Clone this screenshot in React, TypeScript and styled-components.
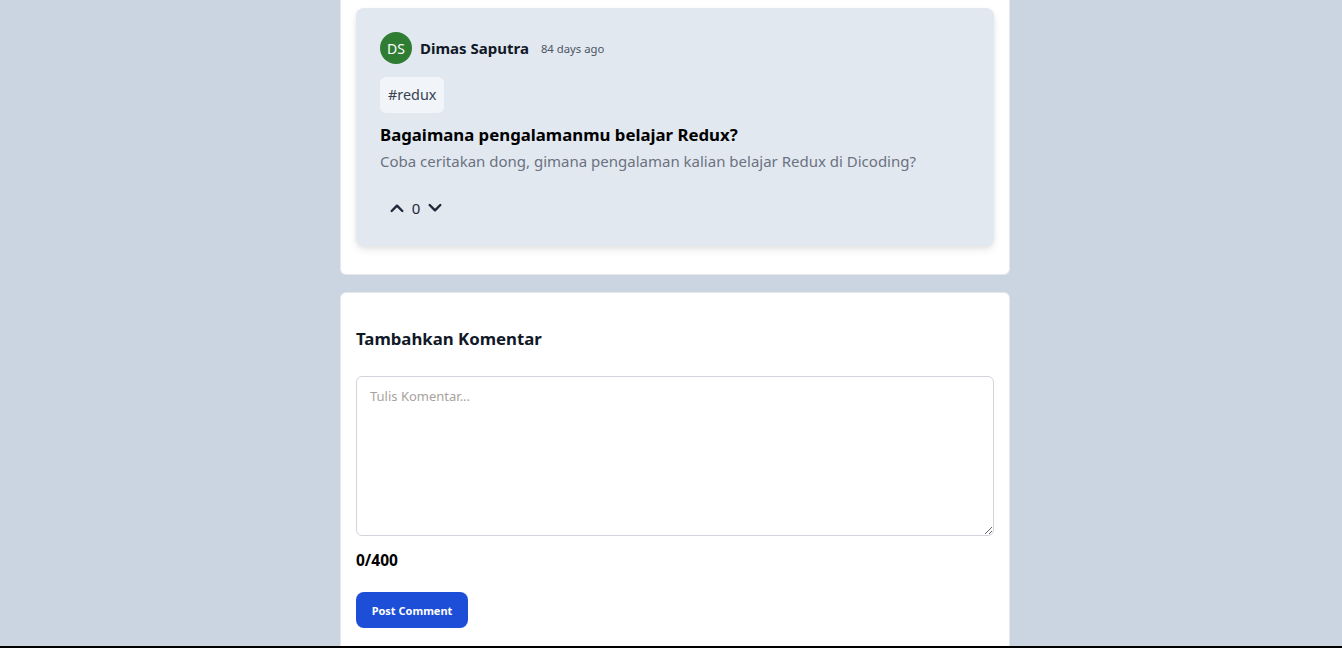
import React from "react";
import styled, { createGlobalStyle } from "styled-components";

const Global = createGlobalStyle`
  html, body { margin: 0; padding: 0; background: #cbd5e1; }
  body { font-family: "Noto Sans", "Open Sans", sans-serif; height: 648px; overflow: hidden; }
  * { box-sizing: border-box; }
`;

const Page = styled.div`
  display: flex;
  flex-direction: column;
  align-items: center;
  gap: 17px;
  padding-left: 8px;
  height: 646px;
  overflow: hidden;
`;

const Panel = styled.section<{ $top?: boolean }>`
  width: 670px;
  background: #ffffff;
  border: 1px solid #e5e7eb;
  border-radius: ${(p) => (p.$top ? "0 0 6px 6px" : "6px 6px 0 0")};
  border-top: ${(p) => (p.$top ? "none" : "1px solid #e5e7eb")};
  padding: ${(p) => (p.$top ? "8px 15px 28px" : "26px 15px 40px")};
  flex-shrink: 0;
`;

const Card = styled.article`
  background: #e2e8f0;
  border-radius: 8px;
  box-shadow: 0 4px 8px rgba(0, 0, 0, 0.08), 0 2px 4px rgba(0, 0, 0, 0.05);
  padding: 24px 24px 28px;
  display: flex;
  flex-direction: column;
`;

const Header = styled.div`
  display: flex;
  align-items: center;
`;

const Avatar = styled.div`
  width: 32px;
  height: 32px;
  border-radius: 50%;
  background: #2e7d32;
  color: #fff;
  font-size: 14px;
  display: flex;
  align-items: center;
  justify-content: center;
  margin-right: 8px;
`;

const Name = styled.span`
  font-weight: 700;
  font-size: 15px;
  color: #111827;
  margin-right: 12px;
`;

const Time = styled.span`
  font-size: 11.3px;
  color: #4b5563;
`;

const Tag = styled.span`
  align-self: flex-start;
  margin-top: 13px;
  background: #f1f5f9;
  border-radius: 6px;
  padding: 0 8px;
  height: 36px;
  line-height: 36px;
  font-size: 14.4px;
  color: #374151;
`;

const Title = styled.h2`
  margin: 10px 0 0;
  font-size: 16.8px;
  line-height: 24px;
  font-weight: 700;
  color: #000;
`;

const Body = styled.p`
  margin: 2px 0 0;
  font-size: 15px;
  line-height: 24px;
  color: #6b7280;
`;

const Votes = styled.div`
  display: flex;
  align-items: center;
  gap: 2px;
  margin-top: 25px;
  padding-left: 7px;
  color: #111827;
`;

const VoteBtn = styled.button`
  background: none;
  border: none;
  padding: 0;
  width: 20px;
  height: 20px;
  display: flex;
  align-items: center;
  justify-content: center;
  color: #1f2937;
`;

const Count = styled.span`
  font-size: 15px;
  color: #1f2937;
  width: 14px;
  text-align: center;
`;

const Heading = styled.h3`
  margin: 0 0 17px;
  font-size: 16.8px;
  line-height: 40px;
  font-weight: 700;
  color: #111827;
`;

const TextArea = styled.textarea`
  display: block;
  width: 100%;
  height: 160px;
  border: 1px solid #d1d5db;
  border-radius: 6px;
  padding: 10px 13px;
  font-family: "Noto Sans", "Open Sans", sans-serif;
  font-size: 13px;
  resize: vertical;
  outline: none;
  &::placeholder { color: #a8a29e; }
`;

const Counter = styled.div`
  margin-top: 13px;
  font-size: 15.5px;
  font-weight: 700;
  color: #000;
`;

const PostButton = styled.button`
  margin-top: 21px;
  width: 112px;
  height: 36px;
  border: none;
  border-radius: 8px;
  background: #1d4ed8;
  color: #fff;
  font-family: "Noto Sans", "Open Sans", sans-serif;
  font-weight: 700;
  font-size: 11px;
`;

const BottomBar = styled.div`
  position: fixed;
  left: 0;
  right: 0;
  bottom: 0;
  height: 2px;
  background: #000;
`;

const Chevron = ({ up }: { up?: boolean }) => (
  <svg width="16" height="16" viewBox="0 0 24 24" fill="none" stroke="currentColor" strokeWidth="3.6" strokeLinecap="round" strokeLinejoin="round">
    <path d={up ? "M4 16.5l8-8 8 8" : "M4 7.5l8 8 8-8"} />
  </svg>
);

export default function App() {
  return (
    <>
      <Global />
      <Page>
        <Panel $top>
          <Card>
            <Header>
              <Avatar>DS</Avatar>
              <Name>Dimas Saputra</Name>
              <Time>84 days ago</Time>
            </Header>
            <Tag>#redux</Tag>
            <Title>Bagaimana pengalamanmu belajar Redux?</Title>
            <Body>Coba ceritakan dong, gimana pengalaman kalian belajar Redux di Dicoding?</Body>
            <Votes>
              <VoteBtn><Chevron up /></VoteBtn>
              <Count>0</Count>
              <VoteBtn><Chevron /></VoteBtn>
            </Votes>
          </Card>
        </Panel>
        <Panel>
          <Heading>Tambahkan Komentar</Heading>
          <TextArea placeholder="Tulis Komentar..." />
          <Counter>0/400</Counter>
          <PostButton>Post Comment</PostButton>
        </Panel>
      </Page>
      <BottomBar />
    </>
  );
}
